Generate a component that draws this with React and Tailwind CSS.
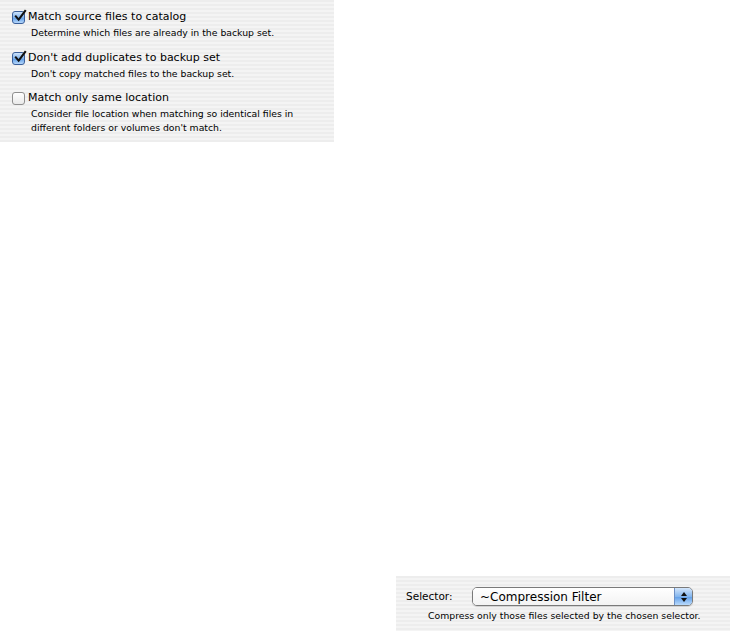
import React from 'react';

const stripes =
  'bg-[repeating-linear-gradient(to_bottom,#ededed_0px,#ededed_2px,#f4f4f4_2px,#f4f4f4_4px)]';

const CheckBox = ({ checked }) => (
  <span
    className={
      'relative inline-block w-[13px] h-[13px] rounded-[3px] border shrink-0 ' +
      (checked
        ? 'border-[#3a5f9a] bg-[linear-gradient(to_bottom,#cfe4fb,#7fb2ec_50%,#5a9be6_51%,#b6d7fb)]'
        : 'border-[#8f8f8f] bg-[linear-gradient(to_bottom,#ffffff,#e9e9e9)]')
    }
  >
    {checked && (
      <svg className="absolute left-[1px] top-[-3px]" width="13" height="14" viewBox="0 0 14 14">
        <path d="M2 7.5 L5 11 L12 1.5" fill="none" stroke="#111" strokeWidth="2.2" strokeLinecap="square" />
      </svg>
    )}
  </span>
);

const Option = ({ checked, title, className = '', children }) => (
  <div className={'flex flex-col ' + className}>
    <div className="flex items-center gap-[3px] text-[11px] text-black leading-[16px]">
      <CheckBox checked={checked} />
      <span>{title}</span>
    </div>
    <div className="mt-[1px] pl-[19px] text-[9.3px] leading-[14px] text-black">{children}</div>
  </div>
);

export default function App() {
  return (
    <div className="w-[730px] h-[631px] bg-white flex flex-col justify-between font-['DejaVu_Sans',sans-serif]">
      <div className={'w-[334px] h-[142px] pt-[9px] pl-[12px] flex flex-col ' + stripes}>
        <Option checked title="Match source files to catalog">
          Determine which files are already in the backup set.
        </Option>
        <Option checked className="mt-[10px]" title="Don't add duplicates to backup set">
          Don't copy matched files to the backup set.
        </Option>
        <Option checked={false} className="mt-[9px]" title="Match only same location">
          Consider file location when matching so identical files in
          <br />
          different folders or volumes don't match.
        </Option>
      </div>

      <div className={'self-end w-[334px] h-[55px] pt-[11px] flex flex-col ' + stripes}>
        <div className="flex items-center pl-[10px]">
          <span className="w-[66px] text-[10.5px] text-black">Selector:</span>
          <div className="w-[221px] h-[19px] flex rounded-[5px] border border-[#7a7a7a] overflow-hidden shadow-[0_1px_1px_rgba(0,0,0,0.15)]">
            <div className="flex-1 flex items-center pl-[7px] text-[12px] text-black bg-[linear-gradient(to_bottom,#ffffff,#f3f3f3)]">
              ~Compression Filter
            </div>
            <div className="w-[18px] flex flex-col items-center justify-center gap-[2px] border-l border-[#6c8fc4] bg-[linear-gradient(to_bottom,#d3e6fc,#84b6ee_50%,#5e9de8_51%,#b9dafc)]">
              <svg width="6" height="4" viewBox="0 0 6 4"><path d="M3 0 L6 4 L0 4 Z" fill="#111" /></svg>
              <svg width="6" height="4" viewBox="0 0 6 4"><path d="M0 0 L6 0 L3 4 Z" fill="#111" /></svg>
            </div>
          </div>
        </div>
        <div className="pl-[32px] pt-[3px] text-[9.3px] text-black">
          Compress only those files selected by the chosen selector.
        </div>
      </div>
    </div>
  );
}
